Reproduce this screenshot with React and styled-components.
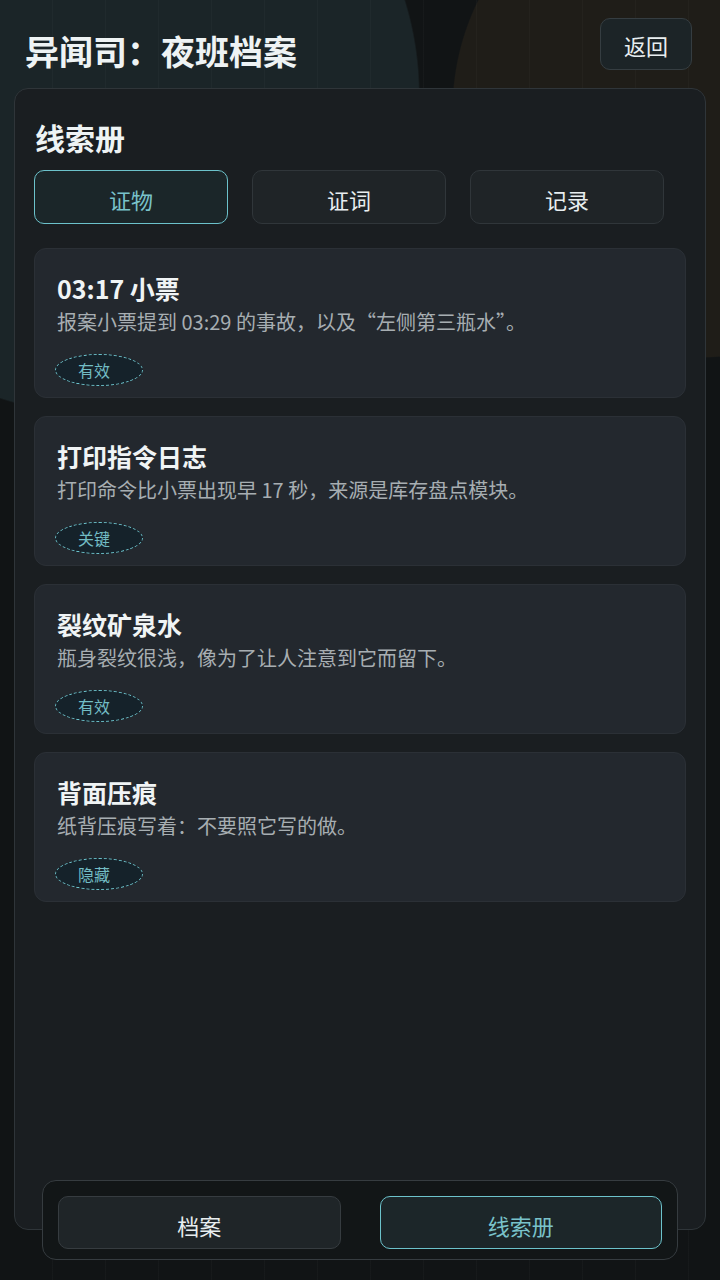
import React from "react";
import styled, { createGlobalStyle } from "styled-components";

const Global = createGlobalStyle`
  html, body {
    margin: 0;
    padding: 0;
    background: #111415;
  }
  * {
    box-sizing: border-box;
  }
  body {
    font-family: "Noto Sans CJK SC", "Noto Sans", sans-serif;
    color: #e8eef0;
  }
`;

const Page = styled.div`
  position: relative;
  min-height: 1280px;
  padding: 18px 14px 50px;
  display: flex;
  flex-direction: column;
  background:
    repeating-linear-gradient(90deg, transparent 0 52px, rgba(255, 255, 255, 0.025) 52px 53px),
    radial-gradient(circle 320px at 100px 95px, #1b2528 0 99.5%, transparent 100%),
    radial-gradient(circle 248px at 700px 110px, #1f1d18 0 99.5%, transparent 100%),
    #111415;
`;

const Header = styled.header`
  display: flex;
  justify-content: space-between;
  align-items: flex-start;
  padding-left: 11px;
  padding-right: 14px;
  height: 52px;
`;

const Title = styled.h1`
  margin: 10px 0 0;
  font-size: 34px;
  font-weight: 700;
  line-height: 46px;
  color: #eef3f4;
`;

const BackButton = styled.button`
  width: 92px;
  height: 52px;
  padding-top: 3px;
  border-radius: 10px;
  background: #1c2427;
  border: 1px solid #353d41;
  color: #e8eef0;
  font-family: inherit;
  font-size: 22px;
`;

const Panel = styled.section`
  margin-top: 18px;
  flex: 1;
  background: #1a1e21;
  border: 1px solid #2f3539;
  border-radius: 14px;
  padding: 22px 19px 20px;
`;

const PanelTitle = styled.h2`
  margin: 6px 0 0 1px;
  font-size: 30px;
  font-weight: 700;
  line-height: 40px;
  color: #eef3f4;
`;

const Tabs = styled.div`
  display: grid;
  grid-template-columns: repeat(3, 194px);
  gap: 24px;
  margin-top: 13px;
`;

const Tab = styled.button`
  height: 54px;
  padding-top: 5px;
  border-radius: 10px;
  font-family: inherit;
  font-size: 22px;
  background: ${(p) => (p.$active ? "#1b2629" : "#1f2427")};
  border: 1px solid ${(p) => (p.$active ? "#6cc2cb" : "#30363a")};
  color: ${(p) => (p.$active ? "#79c2ca" : "#e8eef0")};
`;

const CardList = styled.div`
  display: flex;
  flex-direction: column;
  gap: 18px;
  margin-top: 24px;
`;

const Card = styled.article`
  height: 150px;
  background: #23282e;
  border: 1px solid #2b3036;
  border-radius: 12px;
  padding: 21px 22px 12px;
`;

const CardTitle = styled.h3`
  margin: 0;
  font-size: 25px;
  font-weight: 700;
  line-height: 36px;
  color: #f0f4f5;
`;

const CardText = styled.p`
  margin: 1px 0 0;
  font-size: 20px;
  line-height: 30px;
  color: #a7aeb2;
`;

const Badge = styled.span`
  display: inline-flex;
  align-items: center;
  justify-content: center;
  margin: 17px 0 0 -2px;
  padding-right: 10px;
  width: 88px;
  height: 32px;
  border-radius: 50%;
  border: 1px dashed #6cc2cb;
  background: #15222a;
  color: #72bcc4;
  font-size: 16px;
`;

const BottomNav = styled.nav`
  position: absolute;
  left: 42px;
  top: 1180px;
  width: 636px;
  height: 80px;
  display: grid;
  grid-template-columns: 1fr 1fr;
  gap: 39px;
  padding: 15px 15px;
  background: #121617;
  border: 1px solid #363c40;
  border-radius: 14px;
`;

const NavButton = styled.button`
  height: 53px;
  padding-top: 5px;
  border-radius: 10px;
  font-family: inherit;
  font-size: 22px;
  background: ${(p) => (p.$active ? "#1c2629" : "#1f2528")};
  border: 1px solid ${(p) => (p.$active ? "#6cc2cb" : "#363c40")};
  color: ${(p) => (p.$active ? "#79c2ca" : "#e8eef0")};
`;

const clues = [
  { title: "03:17 小票", text: "报案小票提到 03:29 的事故，以及“左侧第三瓶水”。", tag: "有效" },
  { title: "打印指令日志", text: "打印命令比小票出现早 17 秒，来源是库存盘点模块。", tag: "关键" },
  { title: "裂纹矿泉水", text: "瓶身裂纹很浅，像为了让人注意到它而留下。", tag: "有效" },
  { title: "背面压痕", text: "纸背压痕写着：不要照它写的做。", tag: "隐藏" },
];

const tabs = ["证物", "证词", "记录"];

export default function App() {
  return (
    <>
      <Global />
      <Page>
        <Header>
          <Title>异闻司：夜班档案</Title>
          <BackButton>返回</BackButton>
        </Header>
        <Panel>
          <PanelTitle>线索册</PanelTitle>
          <Tabs>
            {tabs.map((t, i) => (
              <Tab key={t} $active={i === 0}>
                {t}
              </Tab>
            ))}
          </Tabs>
          <CardList>
            {clues.map((c) => (
              <Card key={c.title}>
                <CardTitle>{c.title}</CardTitle>
                <CardText>{c.text}</CardText>
                <Badge>{c.tag}</Badge>
              </Card>
            ))}
          </CardList>
        </Panel>
        <BottomNav>
          <NavButton>档案</NavButton>
          <NavButton $active>线索册</NavButton>
        </BottomNav>
      </Page>
    </>
  );
}
